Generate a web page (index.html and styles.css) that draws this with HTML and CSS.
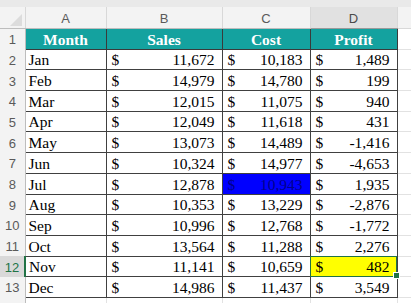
FILE: index.html
```html
<!DOCTYPE html>
<html>
<head>
<meta charset="utf-8">
<link rel="stylesheet" href="styles.css">
</head>
<body>
<div class="topstrip"></div>
<table class="sheet">
  <colgroup>
    <col class="c-rh"><col class="c-a"><col class="c-b"><col class="c-c"><col class="c-d"><col class="c-e">
  </colgroup>
  <tr class="colhead">
    <th class="corner"><span class="tri"></span></th>
    <th>A</th><th>B</th><th>C</th><th class="sel">D</th><th class="blank"></th>
  </tr>
  <tr class="row head">
    <th class="rh">1</th>
    <td class="th">Month</td><td class="th">Sales</td><td class="th">Cost</td><td class="th">Profit</td><td class="blank"></td>
  </tr>
  <tr class="row"><th class="rh">2</th><td class="m">Jan</td><td><div class="acc"><span>$</span><span>11,672</span></div></td><td><div class="acc"><span>$</span><span>10,183</span></div></td><td><div class="acc"><span>$</span><span>1,489</span></div></td><td class="blank"></td></tr>
  <tr class="row"><th class="rh">3</th><td class="m">Feb</td><td><div class="acc"><span>$</span><span>14,979</span></div></td><td><div class="acc"><span>$</span><span>14,780</span></div></td><td><div class="acc"><span>$</span><span>199</span></div></td><td class="blank"></td></tr>
  <tr class="row"><th class="rh">4</th><td class="m">Mar</td><td><div class="acc"><span>$</span><span>12,015</span></div></td><td><div class="acc"><span>$</span><span>11,075</span></div></td><td><div class="acc"><span>$</span><span>940</span></div></td><td class="blank"></td></tr>
  <tr class="row"><th class="rh">5</th><td class="m">Apr</td><td><div class="acc"><span>$</span><span>12,049</span></div></td><td><div class="acc"><span>$</span><span>11,618</span></div></td><td><div class="acc"><span>$</span><span>431</span></div></td><td class="blank"></td></tr>
  <tr class="row"><th class="rh">6</th><td class="m">May</td><td><div class="acc"><span>$</span><span>13,073</span></div></td><td><div class="acc"><span>$</span><span>14,489</span></div></td><td><div class="acc"><span>$</span><span>-1,416</span></div></td><td class="blank"></td></tr>
  <tr class="row"><th class="rh">7</th><td class="m">Jun</td><td><div class="acc"><span>$</span><span>10,324</span></div></td><td><div class="acc"><span>$</span><span>14,977</span></div></td><td><div class="acc"><span>$</span><span>-4,653</span></div></td><td class="blank"></td></tr>
  <tr class="row"><th class="rh">8</th><td class="m">Jul</td><td><div class="acc"><span>$</span><span>12,878</span></div></td><td class="blue"><div class="acc"><span>$</span><span>10,943</span></div></td><td><div class="acc"><span>$</span><span>1,935</span></div></td><td class="blank"></td></tr>
  <tr class="row"><th class="rh">9</th><td class="m">Aug</td><td><div class="acc"><span>$</span><span>10,353</span></div></td><td><div class="acc"><span>$</span><span>13,229</span></div></td><td><div class="acc"><span>$</span><span>-2,876</span></div></td><td class="blank"></td></tr>
  <tr class="row"><th class="rh">10</th><td class="m">Sep</td><td><div class="acc"><span>$</span><span>10,996</span></div></td><td><div class="acc"><span>$</span><span>12,768</span></div></td><td><div class="acc"><span>$</span><span>-1,772</span></div></td><td class="blank"></td></tr>
  <tr class="row"><th class="rh">11</th><td class="m">Oct</td><td><div class="acc"><span>$</span><span>13,564</span></div></td><td><div class="acc"><span>$</span><span>11,288</span></div></td><td><div class="acc"><span>$</span><span>2,276</span></div></td><td class="blank"></td></tr>
  <tr class="row"><th class="rh selrow">12</th><td class="m">Nov</td><td><div class="acc"><span>$</span><span>11,141</span></div></td><td><div class="acc"><span>$</span><span>10,659</span></div></td><td class="yellow"><div class="acc"><span>$</span><span>482</span></div><span class="handle"></span></td><td class="blank"></td></tr>
  <tr class="row"><th class="rh">13</th><td class="m">Dec</td><td><div class="acc"><span>$</span><span>14,986</span></div></td><td><div class="acc"><span>$</span><span>11,437</span></div></td><td><div class="acc"><span>$</span><span>3,549</span></div></td><td class="blank"></td></tr>
  <tr class="row last"><th class="rh">14</th><td class="e"></td><td class="e"></td><td class="e"></td><td class="e"></td><td class="blank"></td></tr>
</table>
</body>
</html>
```
FILE: styles.css
```css
html, body {
  margin: 0;
  padding: 0;
  background: #ffffff;
  overflow: hidden;
}
.topstrip {
  height: 7px;
  background: #e9e9e9;
}
.sheet {
  border-collapse: collapse;
  table-layout: fixed;
  width: 420px;
}
.c-rh { width: 25px; }
.c-a { width: 81px; }
.c-b { width: 116px; }
.c-c { width: 88px; }
.c-d { width: 87px; }
.c-e { width: 23px; }

.colhead th {
  height: 19px;
  padding: 2px 0 0 0;
  background: #f3f3f3;
  font-family: "Liberation Sans", Arial, sans-serif;
  font-weight: normal;
  font-size: 13px;
  color: #5a5a5a;
  border-left: 1px solid #d8d8d8;
  border-bottom: 1px solid #bdbdbd;
  text-align: center;
}
.colhead th.corner {
  border-left: none;
  position: relative;
}
.tri {
  position: absolute;
  right: 3px;
  bottom: 2px;
  width: 0;
  height: 0;
  border-left: 12px solid transparent;
  border-bottom: 12px solid #dcdcdc;
}
.colhead th.sel {
  background: #e1e1e1;
  color: #4a4a4a;
  border-bottom: 1px solid #9a9a9a;
}
.colhead th.blank { border-bottom: 1px solid #d8d8d8; }

.row { height: 20.7px; }
.row th.rh {
  padding: 0 0 1px 0;
  vertical-align: bottom;
  background: #f3f3f3;
  font-family: "Liberation Sans", Arial, sans-serif;
  font-weight: normal;
  font-size: 13px;
  line-height: 17px;
  color: #5a5a5a;
  text-align: center;
  border-right: 1px solid #bdbdbd;
}
.row th.selrow {
  background: #d9d9d9;
  color: #217346;
  border-right: 2px solid #217346;
}
.row td {
  padding: 0 0 0 0;
  vertical-align: bottom;
  border: 1px solid #404040;
  font-family: "Liberation Serif", "Times New Roman", serif;
  font-size: 15.5px;
  color: #000;
  line-height: 18px;
  white-space: nowrap;
}
.row td.th {
  background: #14a29f;
  color: #ffffff;
  font-weight: bold;
  text-align: center;
  border-color: #3a3a3a;
}
.row td.m { padding-left: 3px; }
.acc {
  display: flex;
  justify-content: space-between;
  padding: 0 7px 0 5px;
}
.row td.blue { background: #0000ff; color: #00008a; }
.row td.yellow {
  background: #ffff00;
  position: relative;
  outline: 1px solid #217346;
  outline-offset: -1px;
}
.handle {
  position: absolute;
  right: -3px;
  bottom: -3px;
  width: 5px;
  height: 5px;
  background: #217346;
  border: 1px solid #fff;
}
.row td.blank {
  border: none;
  border-bottom: 1px solid #e2e2e2;
  border-left: 1px solid #404040;
}
.row.last td.e {
  border: none;
  border-top: 1px solid #808080;
  border-right: 1px solid #e2e2e2;
}
.row.last td.blank { border-left: none; }
```
